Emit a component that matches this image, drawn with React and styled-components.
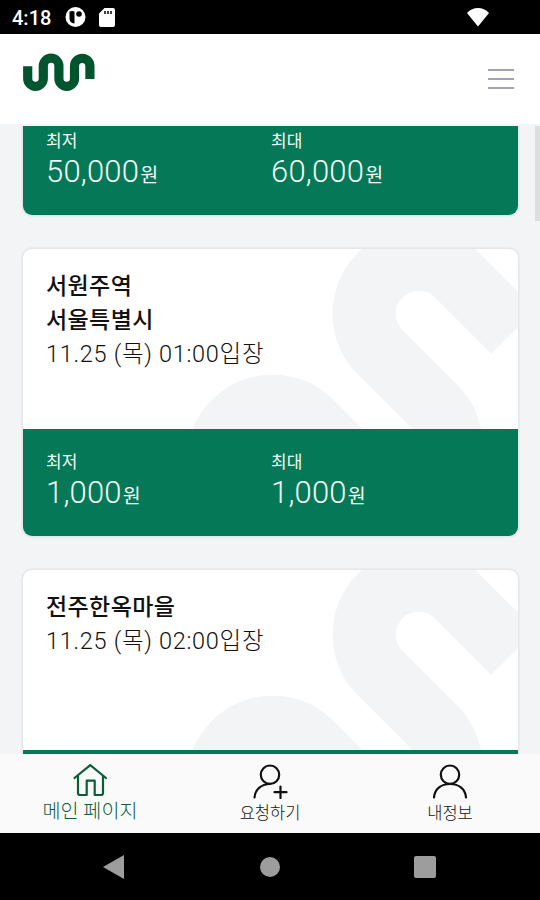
import React from "react";
import styled, { createGlobalStyle } from "styled-components";

const GlobalStyle = createGlobalStyle`
  * {
    box-sizing: border-box;
  }
  body {
    margin: 0;
    background: #000;
    font-family: Roboto, "Noto Sans CJK KR", sans-serif;
  }
`;

const Phone = styled.div`
  width: 540px;
  height: 900px;
  display: flex;
  flex-direction: column;
  overflow: hidden;
  background: #f3f4f6;
`;

const StatusBar = styled.div`
  height: 34px;
  flex-shrink: 0;
  display: flex;
  align-items: center;
  padding: 0 51px 0 12px;
  background: #000;
  color: #fff;
`;

const Clock = styled.span`
  width: 53px;
  font-size: 20px;
  font-weight: 500;
  line-height: 34px;
  padding-top: 2px;
`;

const StatusIcons = styled.div`
  flex: 1;
  display: flex;
  align-items: center;
  gap: 13px;
`;

const Header = styled.header`
  height: 90px;
  flex-shrink: 0;
  display: flex;
  justify-content: space-between;
  align-items: flex-start;
  padding: 18px 26px 0 22px;
  background: #fff;
`;

const MenuButton = styled.button`
  display: flex;
  flex-direction: column;
  gap: 7px;
  width: 26px;
  margin-top: 17px;
  padding: 0;
  border: 0;
  background: none;
`;

const MenuLine = styled.span`
  height: 2px;
  background: #a3a2b4;
`;

const Content = styled.main`
  position: relative;
  flex: 1;
  min-height: 0;
  margin-top: 2px;
  overflow: hidden;
`;

const ScrollThumb = styled.div`
  position: absolute;
  top: -2px;
  right: 0;
  width: 5px;
  height: 97px;
  background: #dcdee0;
`;

const CardList = styled.div`
  display: flex;
  flex-direction: column;
  gap: 32px;
  padding: 0 21px 0 22px;
  margin-top: -199px;
`;

const Card = styled.article`
  height: 289px;
  flex-shrink: 0;
  display: flex;
  flex-direction: column;
  border: 1px solid #e5e7eb;
  border-radius: 10px;
  background: #fff;
  overflow: hidden;
  box-shadow: 0 0 2px rgba(0, 0, 0, 0.12);
`;

const CardTop = styled.div`
  position: relative;
  height: 180px;
  padding: 21px 23px;
`;

const Pattern = styled.svg`
  position: absolute;
  top: 0;
  left: 0;
`;

const CardText = styled.div`
  position: relative;
  display: flex;
  flex-direction: column;
`;

const Place = styled.strong`
  font-size: 23px;
  font-weight: 500;
  line-height: 34px;
  letter-spacing: 0.4px;
  color: #111;
`;

const EnterTime = styled.span`
  font-size: 23.5px;
  font-weight: 300;
  line-height: 33px;
  letter-spacing: 0.7px;
  color: #111;
`;

const PriceRow = styled.div`
  flex: 1;
  display: grid;
  grid-template-columns: 225px 1fr;
  padding: 21px 23px 0;
  background: #047857;
  color: #f4fbf6;
`;

const PriceLabel = styled.div`
  font-size: 17px;
  line-height: 24px;
`;

const Price = styled.div`
  font-size: 31px;
  font-weight: 350;
  line-height: 37px;
  letter-spacing: 0.2px;
`;

const Won = styled.span`
  margin-left: 1px;
  font-size: 19.5px;
  font-weight: 400;
`;

const TabBar = styled.nav`
  height: 79px;
  flex-shrink: 0;
  display: grid;
  grid-template-columns: repeat(3, 1fr);
  background: #fafafa;
`;

const Tab = styled.div`
  display: flex;
  flex-direction: column;
  align-items: center;
  padding-top: 8px;
  color: ${(props) => (props.$active ? "#0b5c3b" : "#111")};
`;

const TabLabel = styled.span`
  margin-top: ${(props) => (props.$active ? "1px" : "3px")};
  font-size: ${(props) => (props.$active ? "19.6px" : "16.5px")};
  font-weight: 300;
  line-height: 24px;
  white-space: nowrap;
`;

const SystemBar = styled.div`
  height: 67px;
  flex-shrink: 0;
  display: flex;
  justify-content: space-between;
  align-items: center;
  padding: 0 104px 0 103px;
  background: #000;
`;

const cards = [
  { id: 1, places: ["서원주역"], time: "11.25 (목) 01:00입장", min: "50,000", max: "60,000" },
  { id: 2, places: ["서원주역", "서울특별시"], time: "11.25 (목) 01:00입장", min: "1,000", max: "1,000" },
  { id: 3, places: ["전주한옥마을"], time: "11.25 (목) 02:00입장", min: "1,000", max: "1,000" },
];

function Logo() {
  return (
    <svg width="74" height="42" viewBox="22 52 74 42" fill="none" stroke="#00552f" strokeWidth="9.2">
      <path d="M27.7 66.3V78.6a7.8 7.8 0 0 0 15.6 0V66a7.8 7.8 0 0 1 15.6 0V78.6a7.8 7.8 0 0 0 15.6 0V66a7.7 7.7 0 0 1 15.4 0V79" />
    </svg>
  );
}

function CardPattern() {
  return (
    <Pattern width="495" height="180" viewBox="23 249 495 180" fill="none" stroke="#f3f4f6" strokeWidth="63">
      <path d="M514.5 331.5L456.5 273.5A54.5 54.5 0 0 0 379.5 350.5L436.5 407.5A54.5 54.5 0 0 1 398 500" transform="translate(-1 0)" />
      <path d="M350 460L310.5 420.5A54.5 54.5 0 0 0 233.5 497.5" transform="translate(-1 0)" />
      <circle cx="271" cy="459" r="30" fill="#f3f4f6" stroke="none" />
    </Pattern>
  );
}

function PriceBox(props) {
  return (
    <div>
      <PriceLabel>{props.label}</PriceLabel>
      <Price>
        {props.value}
        <Won>원</Won>
      </Price>
    </div>
  );
}

function TicketCard(props) {
  return (
    <Card>
      <CardTop>
        <CardPattern />
        <CardText>
          {props.card.places.map((place) => (
            <Place key={place}>{place}</Place>
          ))}
          <EnterTime>{props.card.time}</EnterTime>
        </CardText>
      </CardTop>
      <PriceRow>
        <PriceBox label="최저" value={props.card.min} />
        <PriceBox label="최대" value={props.card.max} />
      </PriceRow>
    </Card>
  );
}

function TabIcon(props) {
  return (
    <svg width="40" height="37" viewBox="0 0 40 37" fill="none" stroke="currentColor" strokeWidth="2.2" strokeLinecap="round" strokeLinejoin="round">
      {props.children}
    </svg>
  );
}

function App() {
  return (
    <Phone>
      <GlobalStyle />
      <StatusBar>
        <Clock>4:18</Clock>
        <StatusIcons>
          <svg width="21" height="22" viewBox="0 0 21 22">
            <circle cx="10.5" cy="11" r="10" fill="#fff" />
            <path d="M4.5 5.500Q7 4.500 9.500 5.500V17.500Q4 17 4.500 11z" fill="#000" />
            <circle cx="14" cy="8" r="2.800" fill="#000" />
          </svg>
          <svg width="16" height="19" viewBox="0 0 16 19">
            <path d="M5.500 0H14a2 2 0 0 1 2 2v15a2 2 0 0 1-2 2H2a2 2 0 0 1-2-2V5.500z" fill="#fff" />
            <path d="M6 3v3M9 3v3M12 3v3" stroke="#000" strokeWidth="1.500" />
          </svg>
        </StatusIcons>
        <svg width="22" height="20" viewBox="0 0 22 20">
          <path d="M11 19.500L0 6C6-.8 16-.8 22 6z" fill="#fff" />
        </svg>
      </StatusBar>
      <Header>
        <Logo />
        <MenuButton>
          <MenuLine />
          <MenuLine />
          <MenuLine />
        </MenuButton>
      </Header>
      <Content>
        <CardList>
          {cards.map((card) => (
            <TicketCard key={card.id} card={card} />
          ))}
        </CardList>
        <ScrollThumb />
      </Content>
      <TabBar>
        <Tab $active>
          <TabIcon>
            <path d="M4.500 16L20.300 3.200L36 16M8 14V31Q8 33 10 33H16.700V18.700H24.700V33H31Q33 33 33 31V14" />
          </TabIcon>
          <TabLabel $active>메인 페이지</TabLabel>
        </Tab>
        <Tab>
          <TabIcon>
            <circle cx="20" cy="12.700" r="9.200" />
            <path d="M4.500 35.500C5 28 11 22 20 22M30.500 24.500V36M24.500 30.200H36.500" />
          </TabIcon>
          <TabLabel>요청하기</TabLabel>
        </Tab>
        <Tab>
          <TabIcon>
            <circle cx="20" cy="12.700" r="9.200" />
            <path d="M4 35.500C4.500 27 11 22 20 22S35.500 27 36 35.500" />
          </TabIcon>
          <TabLabel>내정보</TabLabel>
        </Tab>
      </TabBar>
      <SystemBar>
        <svg width="21" height="24" viewBox="0 0 21 24">
          <path d="M0 12L21 0V24z" fill="#9d9d9d" />
        </svg>
        <svg width="22" height="22" viewBox="0 0 22 22">
          <circle cx="12" cy="11" r="10" fill="#9d9d9d" />
        </svg>
        <svg width="22" height="22" viewBox="0 0 22 22">
          <rect width="22" height="22" rx="2" fill="#9d9d9d" />
        </svg>
      </SystemBar>
    </Phone>
  );
}

export default App;
